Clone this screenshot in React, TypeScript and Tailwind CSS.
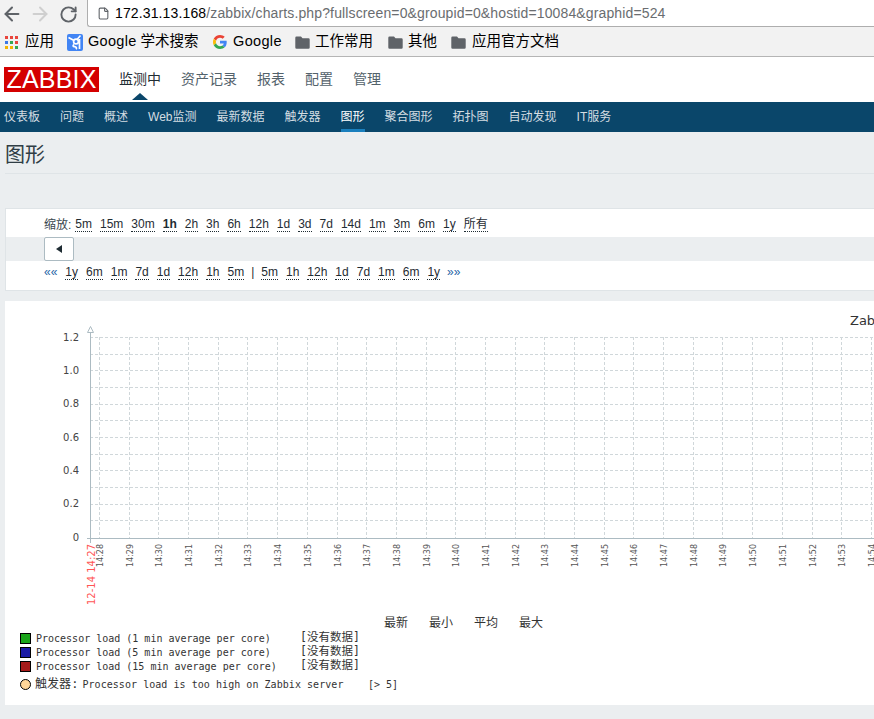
import React from 'react';
import { ArrowLeft, ArrowRight, RotateCw, File } from 'lucide-react';

const FONT = '"Liberation Sans", "Noto Sans CJK SC", sans-serif';
const MONO = '"DejaVu Sans Mono", "Noto Sans CJK SC", monospace';

const mainMenu = ['监测中', '资产记录', '报表', '配置', '管理'];
const subMenu = ['仪表板', '问题', '概述', 'Web监测', '最新数据', '触发器', '图形', '聚合图形', '拓扑图', '自动发现', 'IT服务'];
const zoomLinks = ['5m', '15m', '30m', '1h', '2h', '3h', '6h', '12h', '1d', '3d', '7d', '14d', '1m', '3m', '6m', '1y', '所有'];
const backLinks = ['1y', '6m', '1m', '7d', '1d', '12h', '1h', '5m'];
const fwdLinks = ['5m', '1h', '12h', '1d', '7d', '1m', '6m', '1y'];

const legend = [
  { color: 'bg-[#1aa51a]', label: 'Processor load (1 min average per core)' },
  { color: 'bg-[#1a1aa5]', label: 'Processor load (5 min average per core)' },
  { color: 'bg-[#a51a1a]', label: 'Processor load (15 min average per core)' },
];

const hLines = [337, 354, 370, 387, 404, 420, 437, 454, 470, 487, 504, 520];
const yLabels = [
  { y: 341, t: '1.2' },
  { y: 374, t: '1.0' },
  { y: 407, t: '0.8' },
  { y: 441, t: '0.6' },
  { y: 474, t: '0.4' },
  { y: 507, t: '0.2' },
  { y: 541, t: '0' },
];
const minutes = Array.from({ length: 27 }, (_, i) => ({
  x: Math.floor(99.5 + i * 29.69),
  t: `14:${28 + i}`,
}));

const FolderIcon = () => (
  <svg width="15" height="13" viewBox="0 0 15 13" className="shrink-0">
    <path d="M1.5 0.5h4.5l1.5 1.8h6a1.2 1.2 0 0 1 1.2 1.2v8a1.2 1.2 0 0 1-1.2 1.2h-12a1.2 1.2 0 0 1-1.2-1.2v-9.8a1.2 1.2 0 0 1 1.2-1.2z" fill="#5f6368" />
  </svg>
);

const AppsIcon = () => {
  const colors = ['#e8453c', '#e8453c', '#e8453c', '#3b78e7', '#34a853', '#e8453c', '#f4b400', '#f4b400', '#34a853'];
  return (
    <div className="grid grid-cols-3 gap-[2px] w-[13px] shrink-0">
      {colors.map((c, i) => (
        <div key={i} className="w-[3px] h-[3px]" style={{ background: c }} />
      ))}
    </div>
  );
};

const ScholarIcon = () => (
  <svg width="16" height="17" viewBox="0 0 16 17" className="shrink-0">
    <rect width="16" height="17" rx="2" fill="#4285f4" />
    <path d="M1.5 3.5L7 6.5M13.5 1.5L10 5.5" stroke="#fff" strokeWidth="1.6" fill="none" />
    <circle cx="9" cy="7.5" r="2.4" stroke="#fff" strokeWidth="1.7" fill="none" />
    <path d="M7 10.5c-1.5 1-1 2 .5 2.2 2 .3 2.5 1.3 1.5 2.6M12.5 5v10" stroke="#fff" strokeWidth="1.7" fill="none" />
  </svg>
);

const GoogleIcon = () => (
  <svg width="14" height="14" viewBox="0 0 48 48" className="shrink-0">
    <path fill="#ea4335" d="M24 9.5c3.5 0 6.7 1.2 9.2 3.6l6.9-6.9C35.9 2.4 30.4 0 24 0 14.6 0 6.5 5.4 2.6 13.2l8 6.2C12.5 13.6 17.8 9.5 24 9.5z" />
    <path fill="#4285f4" d="M47 24.5c0-1.6-.1-3.1-.4-4.5H24v9h12.9c-.6 3-2.2 5.5-4.7 7.2l7.7 6C44.4 38 47 31.8 47 24.5z" />
    <path fill="#fbbc05" d="M10.6 28.6c-.5-1.4-.8-3-.8-4.6s.3-3.2.8-4.6l-8-6.2C.9 16.5 0 20.1 0 24s.9 7.5 2.6 10.8l8-6.2z" />
    <path fill="#34a853" d="M24 48c6.5 0 11.9-2.1 15.9-5.8l-7.7-6c-2.2 1.4-4.9 2.3-8.2 2.3-6.2 0-11.5-4.2-13.4-9.9l-8 6.2C6.5 42.6 14.6 48 24 48z" />
  </svg>
);

const Bookmark = ({ icon, label, className }: { icon: React.ReactNode; label: React.ReactNode; className?: string }) => (
  <div className={`flex items-center ${className ?? ''}`}>
    {icon}
    <span className="text-[14.5px] text-black whitespace-nowrap">{label}</span>
  </div>
);

const TimeLink = ({ label, bold }: { label: string; bold?: boolean }) => (
  <span className={`border-b border-dotted border-[#1f2c33] leading-[14px] text-[#1f2c33] ${bold ? 'font-bold' : ''}`}>{label}</span>
);

const Chart = () => (
  <svg width="869" height="306" viewBox="5 301 869 306" className="block shrink-0">
    <text x="850" y="325" fontSize="13" fill="#333" fontFamily="DejaVu Sans">Zabbix server: Processor load (1h)</text>
    {hLines.map((y) => (
      <line key={y} x1="90" x2="874" y1={y + 0.5} y2={y + 0.5} stroke="#d0d7da" strokeDasharray="3 2" />
    ))}
    {minutes.map((m) => (
      <line key={m.t} x1={m.x + 0.5} x2={m.x + 0.5} y1="337" y2="538" stroke="#d0d7da" strokeDasharray="3 2" />
    ))}
    <line x1="90.5" x2="90.5" y1="331" y2="543" stroke="#acbbc2" />
    <line x1="87" x2="874" y1="538.5" y2="538.5" stroke="#acbbc2" />
    <path d="M87.5 332.5 L90.5 326.5 L93.5 332.5 Z" fill="#fff" stroke="#acbbc2" />
    {yLabels.map((l) => (
      <text key={l.t} x="79" y={l.y} textAnchor="end" fontSize="10" fill="#444" fontFamily="DejaVu Sans">{l.t}</text>
    ))}
    <text x="94.5" y="544" transform="rotate(-90 94.5 544)" textAnchor="end" fontSize="10" fill="#f55" fontFamily="DejaVu Sans">12-14 14:27</text>
    {minutes.map((m) => (
      <text key={m.t} x={m.x + 3.5} y="544" transform={`rotate(-90 ${m.x + 3.5} 544)`} textAnchor="end" fontSize="8" fill="#555" fontFamily="DejaVu Sans">{m.t}</text>
    ))}
  </svg>
);

export default function App() {
  return (
    <div className="w-[874px] h-[719px] overflow-hidden flex flex-col bg-[#ebeef0] text-[#1f2c33]" style={{ fontFamily: FONT }}>
      {/* browser chrome */}
      <div className="h-[28px] flex bg-[#f2f2f2] shrink-0">
        <div className="w-[87px] flex items-center pl-[1px] gap-[6px] text-[#5f6368] shrink-0">
          <ArrowLeft size={22} strokeWidth={2.2} />
          <ArrowRight size={22} strokeWidth={2.2} className="text-[#cfcfcf]" />
          <RotateCw size={19} strokeWidth={2.4} className="ml-[1.5px]" />
        </div>
        <div className="flex-1 h-[27px] bg-white border border-t-0 border-r-0 border-[#aeaeae] rounded-bl-[3px] flex items-center pl-[9px] gap-[5px]">
          <File size={13} className="text-[#5f6368]" />
          <span className="text-[14px] whitespace-nowrap text-[#6a6d70] tracking-[0.13px]">
            <span className="text-black">172.31.13.168</span>/zabbix/charts.php?fullscreen=0&groupid=0&hostid=10084&graphid=524
          </span>
        </div>
      </div>
      <div className="h-[29px] flex items-center bg-[#f2f2f2] border-b border-[#b5b5b5] pl-[5px] shrink-0">
        <Bookmark icon={<AppsIcon />} label="应用" className="w-[62px] gap-[7px]" />
        <Bookmark icon={<ScholarIcon />} label={<><span className="tracking-[0.3px]">Google</span> 学术搜索</>} className="w-[146px] gap-[5px]" />
        <Bookmark icon={<GoogleIcon />} label={<span className="tracking-[0.35px]">Google</span>} className="w-[82px] gap-[6px]" />
        <Bookmark icon={<FolderIcon />} label="工作常用" className="w-[93px] gap-[5px]" />
        <Bookmark icon={<FolderIcon />} label="其他" className="w-[63px] gap-[5px]" />
        <Bookmark icon={<FolderIcon />} label="应用官方文档" className="gap-[6px]" />
      </div>

      {/* zabbix header */}
      <div className="h-[45px] bg-white flex items-center pl-[4px] shrink-0">
        <div className="w-[95px] h-[25px] bg-[#d40000] text-white flex items-center justify-center text-[25px] leading-none mr-[20px] tracking-[0.2px]">ZABBIX</div>
        <div className="flex gap-[20px] text-[14px]">
          {mainMenu.map((m, i) => (
            <span key={m} className={`relative ${i === 0 ? 'text-[#1f2c33]' : 'text-[#53626b]'}`}>
              {m}
              {i === 0 && (
                <span className="absolute left-1/2 -translate-x-1/2 top-[24px] w-0 h-0 border-x-[8px] border-x-transparent border-b-[7px] border-b-[#0a466a]" />
              )}
            </span>
          ))}
        </div>
      </div>
      <div className="h-[30px] bg-[#0a466a] flex pl-[4px] gap-[20px] text-[12px] shrink-0">
        {subMenu.map((m) => (
          <span key={m} className={`h-[30px] flex items-center whitespace-nowrap ${m === '图形' ? 'text-white border-b-[3px] border-[#1a7fbd] pt-[3px]' : 'text-[#d4dde2]'}`}>{m}</span>
        ))}
      </div>

      {/* page title */}
      <div className="ml-[5px] h-[42px] border-b border-[#dfe4e7] flex items-center text-[20px] text-[#2f3d45] shrink-0 pt-[4px]">图形</div>

      {/* time controls */}
      <div className="ml-[5px] mt-[34px] h-[83px] bg-white border border-r-0 border-[#dfe4e7] shrink-0 text-[12px] pt-[6px]">
        <div className="flex items-center pl-[38px] gap-[8px] h-[19px] whitespace-nowrap">
          <span className="-mr-[4px] text-[#3a4750]">缩放:</span>
          {zoomLinks.map((l) => <TimeLink key={l} label={l} bold={l === '1h'} />)}
        </div>
        <div className="h-[24px] mt-[3px] bg-[#ebeef0] pl-[38px]">
          <div className="w-[30px] h-[24px] bg-white border border-[#acbbc2] rounded-[2px] flex items-center justify-center">
            <div className="w-0 h-0 border-y-[4px] border-y-transparent border-r-[6px] border-r-[#1f2c33]" />
          </div>
        </div>
        <div className="flex items-center pl-[38px] gap-[8px] h-[22px] whitespace-nowrap">
          <span className="text-[#1f65a6]">««</span>
          {backLinks.map((l, i) => <TimeLink key={i} label={l} />)}
          <span className="-mx-[1px]">|</span>
          {fwdLinks.map((l, i) => <TimeLink key={i} label={l} />)}
          <span className="text-[#1f65a6] -ml-[1px]">»»</span>
        </div>
      </div>

      {/* graph */}
      <div className="ml-[5px] mt-[10px] h-[404px] bg-white shrink-0 flex flex-col">
        <Chart />
        <div className="pl-[15px] pt-[8px] whitespace-nowrap text-[#333]" style={{ fontFamily: MONO, fontSize: 10 }}>
          <div className="flex gap-[21px] pl-[364px] h-[16px] text-[12px] items-center">
            <span>最新</span><span>最小</span><span>平均</span><span>最大</span>
          </div>
          {legend.map((row) => (
            <div key={row.label} className="flex items-center h-[14px]">
              <span className={`w-[11px] h-[11px] border border-black ${row.color} shrink-0`} />
              <span className="ml-[5px] w-[264px] shrink-0">{row.label}</span>
              <span className="text-[11.5px]">[没有数据]</span>
            </div>
          ))}
          <div className="flex items-center h-[18px] mt-[2px]">
            <span className="w-[11px] h-[11px] rounded-full border border-black bg-[#ffd699] shrink-0" />
            <span className="ml-[4px] w-[333px] shrink-0 tracking-[0.05px] flex items-center">
              <span className="text-[12px]">触发器:</span>
              <span className="ml-[4px]">Processor load is too high on Zabbix server</span>
            </span>
            <span>[&gt; 5]</span>
          </div>
        </div>
      </div>
    </div>
  );
}
